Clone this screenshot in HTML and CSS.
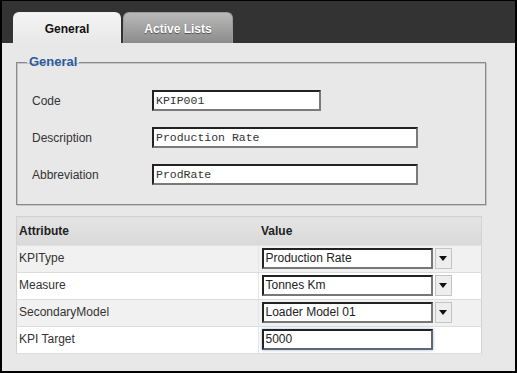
FILE: index.html
```html
<!DOCTYPE html>
<html>
    <head>
        <title>KPI Properties</title>
        <link rel="stylesheet" href="styles.css">
    </head>
    <body>
        <div id="window">
            <div class="tabbar">
                <div class="tab active">General</div>
                <div class="tab">Active Lists</div>
            </div>
            <div class="panel">
                <fieldset class="group">
                    <legend>General</legend>
                    <div class="field">
                        <label>Code</label>
                        <input class="text short" type="text" value="KPIP001">
                    </div>
                    <div class="field">
                        <label>Description</label>
                        <input class="text long" type="text" value="Production Rate">
                    </div>
                    <div class="field">
                        <label>Abbreviation</label>
                        <input class="text long" type="text" value="ProdRate">
                    </div>
                </fieldset>

                <table class="grid">
                    <thead>
                        <tr><th class="attr">Attribute</th><th>Value</th></tr>
                    </thead>
                    <tbody>
                        <tr class="odd">
                            <td>KPIType</td>
                            <td><div class="combo"><span class="combo-field">Production Rate</span><span class="combo-btn"><span class="arrow"></span></span></div></td>
                        </tr>
                        <tr>
                            <td>Measure</td>
                            <td><div class="combo"><span class="combo-field">Tonnes Km</span><span class="combo-btn"><span class="arrow"></span></span></div></td>
                        </tr>
                        <tr class="odd">
                            <td>SecondaryModel</td>
                            <td><div class="combo"><span class="combo-field">Loader Model 01</span><span class="combo-btn"><span class="arrow"></span></span></div></td>
                        </tr>
                        <tr>
                            <td>KPI Target</td>
                            <td><div class="combo"><span class="combo-field focused">5000</span></div></td>
                        </tr>
                    </tbody>
                </table>
            </div>
        </div>
    </body>
</html>
```

FILE: styles.css
```css
html, body {
    margin: 0;
    padding: 0;
}

body {
    font-family: 'Liberation Sans', Arial, sans-serif;
    font-size: 12px;
    color: #333;
}

#window {
    width: 517px;
    height: 373px;
    box-sizing: border-box;
    border: 2px solid #000;
    border-top-width: 1px;
    background-color: #e8e8e8;
    display: flex;
    flex-direction: column;
}

/* ---------- tabs ------------- */
.tabbar {
    height: 42px;
    box-sizing: border-box;
    background-color: #333;
    display: flex;
    align-items: flex-end;
    gap: 2px;
    padding-left: 11px;
}

.tab {
    width: 108px;
    height: 31px;
    box-sizing: border-box;
    border-radius: 6px 6px 0 0;
    text-align: center;
    line-height: 32px;
    font-weight: bold;
    color: #fff;
    text-shadow: 0 1px 1px rgba(0, 0, 0, 0.5);
    background-image: linear-gradient(#b9b9b9, #8c8c8c);
    border: 1px solid #9a9a9a;
    border-bottom: none;
}

.tab.active {
    color: #111;
    text-shadow: none;
    background-image: linear-gradient(#f4f4f4, #e8e8e8);
    border-color: #f0f0f0;
}

.tab + .tab {
    width: 110px;
}

/* ---------- general group ------------- */
.panel {
    flex: 1;
    padding-left: 14px;
}

.group {
    width: 470px;
    box-sizing: border-box;
    margin: 11px 0 0 0;
    padding: 20px 0 19px 10px;
    border: 1px solid #8a8a8a;
    box-shadow: 1px 1px 0 #c6c6c6, inset 1px 1px 0 #c6c6c6;
    display: flex;
    flex-direction: column;
    gap: 16px;
}

.group legend {
    padding: 0 2px;
    line-height: 16px;
    font-size: 13px;
    font-weight: bold;
    color: #2b5aa0;
}

.field {
    display: flex;
    align-items: center;
    padding-left: 5px;
}

.field label {
    width: 120px;
}

.text {
    height: 21px;
    box-sizing: border-box;
    margin: 0;
    padding: 0 2px;
    border: 2px solid;
    border-color: #222 #7a7a7a #7a7a7a #222;
    background: #fff;
    font-family: 'Liberation Mono', 'Courier New', monospace;
    font-size: 11.5px;
    color: #333;
    outline: none;
}

.text.short {
    width: 169px;
}

.text.long {
    width: 266px;
}

/* ---------- attribute grid ------------- */
.grid {
    width: 466px;
    margin-top: 11px;
    border-collapse: collapse;
    border: 1px solid #d2d2d2;
}

.grid th {
    height: 28px;
    padding: 0 3px;
    text-align: left;
    font-weight: bold;
    color: #222;
    background-image: linear-gradient(#e4e4e4, #d9d9d9);
    border-bottom: 1px solid #e2e2e2;
}

.grid th.attr {
    width: 236px;
    padding-left: 2px;
}

.grid td {
    height: 26px;
    padding: 0 3px;
    vertical-align: top;
    background-color: #fff;
    border-bottom: 1px solid #dcdcdc;
}

.grid td:first-child {
    padding: 5px 2px 0;
    height: 21px;
    border-right: 1px solid #e6e6e6;
}

.grid tr.odd td {
    background-color: #f1f1f1;
}

.combo {
    display: flex;
    gap: 2px;
    margin-top: 2px;
}

.combo-field {
    width: 171px;
    height: 21px;
    box-sizing: border-box;
    border: 2px solid;
    border-color: #222 #777 #777 #222;
    background: #fff;
    line-height: 17px;
    padding-left: 2px;
    color: #222;
}

.combo-field.focused {
    border-color: #222 #666 #666 #222;
    box-shadow: 0 0 3px #8fb8ef;
}

.combo-btn {
    width: 17px;
    height: 21px;
    box-sizing: border-box;
    border: 1px solid #c4c4c4;
    background: #eeeeee;
    display: flex;
    align-items: center;
    justify-content: center;
}

.arrow {
    width: 0;
    height: 0;
    border-left: 4px solid transparent;
    border-right: 4px solid transparent;
    border-top: 5px solid #111;
}
```
